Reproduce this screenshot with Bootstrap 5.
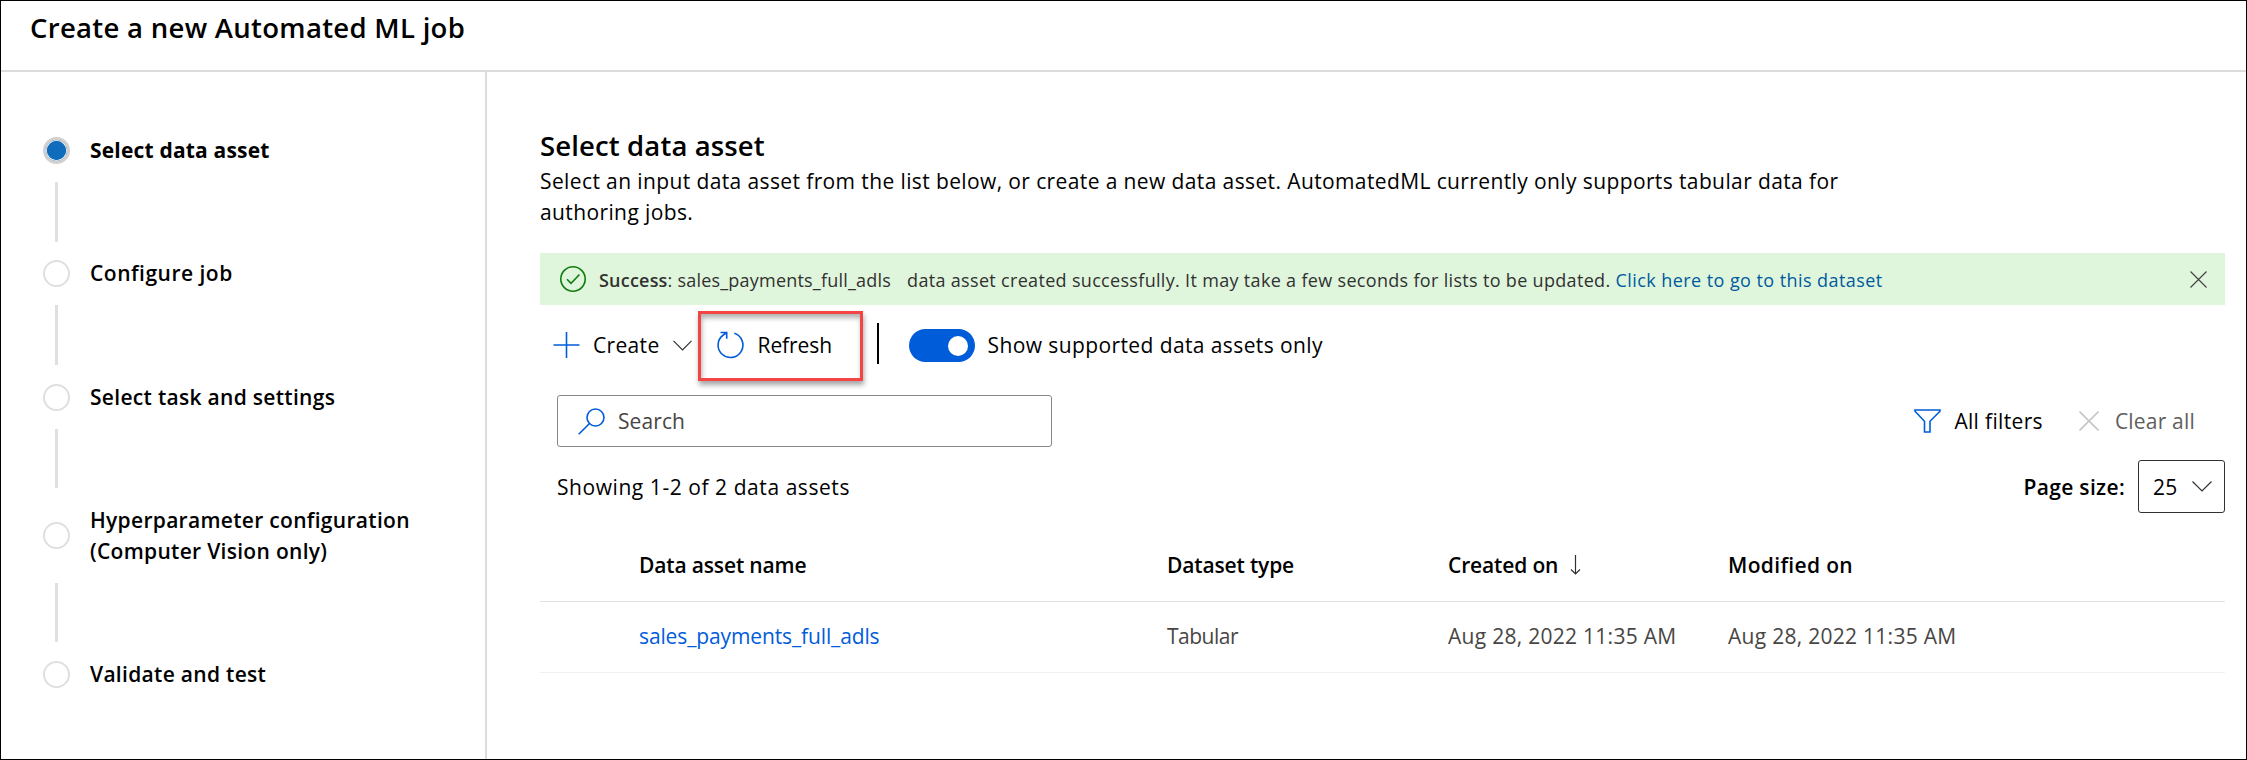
<!DOCTYPE html>
<html lang="en">
<head>
<meta charset="utf-8">
<title>Create a new Automated ML job</title>
<link href="https://cdn.jsdelivr.net/npm/bootstrap@5.3.0/dist/css/bootstrap.min.css" rel="stylesheet">
<style>
body{font-family:"Open Sans","Noto Sans",sans-serif;font-size:21px;line-height:31px;letter-spacing:.33px;color:#000;background:#fff}
.frame{height:760px;border:1px solid #000}
.top-bar{height:71px;border-bottom:2px solid #dcdcdc;padding:9px 0 0 29px}
.title-text{font-size:27.5px;line-height:36px;font-weight:600;margin:0;letter-spacing:.3px}
.content .title-text{letter-spacing:.13px}
.side{width:486px;border-right:2px solid #dcdcdc;padding:63px 0 0 42px}
.step-label{margin:0 0 0 20px;font-weight:600;letter-spacing:.3px}
.step-label.current{font-weight:700;letter-spacing:.18px}
.step-label.wide{letter-spacing:.5px}
.dot{width:27px;height:27px;border:2px solid #e1dfdd;border-radius:50%}
.dot.current{border:3px solid #d2d0ce;background:#0f6cbd;box-shadow:inset 0 0 0 .8px #fff}
.link-line{width:3px;height:59.5px;margin:16px 0 16.8px 12px;background:#e1dfdd}
.content{padding:56px 21px 0 53px}
.intro{margin:2px 0 25px;letter-spacing:.385px}
.banner{height:52px;background:#dff6dd;color:#323130;font-size:18px;line-height:26px;letter-spacing:.27px;padding:0 18px 0 20px}
.banner-text{margin:1px 0 0 13px;letter-spacing:.21px}
.gap-wide{margin:1px 0 0 16px;letter-spacing:.32px}
.banner a{color:#005a9e;letter-spacing:.43px}
.tools{height:80px;margin-bottom:10px;padding-left:13px}
.create-text{margin:1px 13px 0 13px}
.hl{width:165px;height:70px;margin:2px 0 0 6px;padding:0 0 2px 16px;border:3px solid #f44545;box-shadow:1px 4px 5px rgba(0,0,0,.35),inset 1px 4px 5px rgba(0,0,0,.3)}
.refresh-text{margin:1px 0 0 13px;letter-spacing:-.1px}
.vbar{width:2px;height:41px;margin:-4px 0 0 14px;background:#000}
.toggle{width:66px;height:33px;border-radius:17px;background:#015cda;padding-right:7px;margin:1px 13px 0 30px}
.knob{width:20px;height:20px;border-radius:50%;background:#fff}
.toggle-text{margin-top:1px;letter-spacing:.4px}
.filter-row{padding:0 30px 0 17px;margin-bottom:13px}
.search-box{width:495px;height:52px;border:1px solid #8a8886;border-radius:3px;padding-left:20px;color:#484644}
.search-text{margin:1px 0 0 13px;letter-spacing:.1px}
.filters-text{margin:1px 36px 0 13px}
.clear-text{margin:1px 0 0 16px;color:#605e5c;letter-spacing:.2px}
.count-row{padding-left:17px}
.count-text{margin-top:2px;letter-spacing:.56px}
.page-text{margin-top:2px}
.size-box{width:87px;height:53px;border:1px solid #323130;border-radius:3px;padding:0 12px 0 14px;margin-left:13px}
.assets{table-layout:fixed;margin:0}
.assets>:not(caption)>*>*{padding:0;vertical-align:middle}
.assets>thead>tr>th{font-weight:600;color:#000;height:88px;padding-top:17px;border-bottom:1px solid #e3e3e3;letter-spacing:-.15px}
.assets>thead>tr>th:last-child{letter-spacing:.33px}
.assets>tbody>tr>td{height:71px;color:#484644;border-bottom:1px solid #f0f0f0;letter-spacing:.28px}
.assets>tbody>tr>td.kind{letter-spacing:-.5px}
.assets a{color:#015cda;letter-spacing:-.12px}
.arrow{margin:-4px 0 0 6px}
.c-pick{width:99px}.c-name{width:528px}.c-kind{width:281px}.c-date{width:280px}
svg{fill:none;flex:none}
</style>
</head>
<body>
<div class="frame d-flex flex-column overflow-hidden">
<header class="top-bar"><h1 class="title-text">Create a new Automated ML job</h1></header>
<div class="d-flex flex-grow-1">
<nav class="side flex-shrink-0">
<div class="d-flex align-items-center"><span class="dot current"></span><span class="step-label current">Select data asset</span></div>
<div class="link-line"></div>
<div class="d-flex align-items-center"><span class="dot"></span><span class="step-label wide">Configure job</span></div>
<div class="link-line"></div>
<div class="d-flex align-items-center"><span class="dot"></span><span class="step-label">Select task and settings</span></div>
<div class="link-line"></div>
<div class="d-flex align-items-center"><span class="dot"></span><span class="step-label">Hyperparameter configuration<br>(Computer Vision only)</span></div>
<div class="link-line"></div>
<div class="d-flex align-items-center"><span class="dot"></span><span class="step-label">Validate and test</span></div>
</nav>
<main class="content flex-grow-1">
<h2 class="title-text">Select data asset</h2>
<p class="intro">Select an input data asset from the list below, or create a new data asset. AutomatedML currently only supports tabular data for<br>authoring jobs.</p>
<div class="banner d-flex align-items-center">
<svg width="26" height="26" stroke="#107c10" stroke-width="1.6"><circle cx="13" cy="13" r="12.2"/><path d="M7 13.300l4 4L19.500 8.500"/></svg>
<span class="banner-text"><b class="fw-semibold">Success</b>: sales_payments_full_adls</span>
<span class="gap-wide">data asset created successfully. It may take a few seconds for lists to be updated. <a class="text-decoration-none" href="#">Click here to go to this dataset</a></span>
<svg class="ms-auto" width="17" height="17" stroke="#484644" stroke-width="1.2"><path d="M.5 .5l16 16M16.500 .5l-16 16"/></svg>
</div>
<div class="tools d-flex align-items-center">
<svg width="27" height="26" stroke="#015cda" stroke-width="1.600"><path d="M.5 13h26M13.500 0v26"/></svg>
<span class="create-text">Create</span>
<svg width="19" height="11" stroke="#323130" stroke-width="1.200"><path d="M.5 .8l9 9 9-9"/></svg>
<div class="hl d-flex align-items-center">
<svg width="28" height="28" stroke="#015cda" stroke-width="1.600"><path d="M17.300 2.300A12.400 12.400 0 1 1 6.300 4L9.700 1.500M3.500 1.500h6.200v6.300"/></svg>
<span class="refresh-text">Refresh</span>
</div>
<span class="vbar"></span>
<span class="toggle d-flex align-items-center justify-content-end"><span class="knob"></span></span>
<span class="toggle-text">Show supported data assets only</span>
</div>
<div class="filter-row d-flex align-items-center">
<div class="search-box d-flex align-items-center me-auto">
<svg width="27" height="27" stroke="#015cda" stroke-width="1.600"><circle cx="17.500" cy="9.500" r="8.500"/><path d="M11.500 15.500L.7 26.300"/></svg>
<span class="search-text">Search</span>
</div>
<svg width="27" height="24" stroke="#015cda" stroke-width="1.600"><path d="M1 1h25v1.200L16 12.300V23h-5.500V12.300L1 2.200z"/></svg>
<span class="filters-text">All filters</span>
<svg width="20" height="20" stroke="#c8c6c4" stroke-width="1.600"><path d="M.5 .5l19 19M19.500 .5l-19 19"/></svg>
<span class="clear-text">Clear all</span>
</div>
<div class="count-row d-flex align-items-center">
<span class="count-text me-auto">Showing 1-2 of 2 data assets</span>
<span class="page-text fw-semibold">Page size:</span>
<div class="size-box d-flex align-items-center justify-content-between"><span class="page-text">25</span><svg width="20" height="11" stroke="#323130" stroke-width="1.200"><path d="M.5 .5L10 10 19.500 .5"/></svg></div>
</div>
<table class="assets table">
<colgroup><col class="c-pick"><col class="c-name"><col class="c-kind"><col class="c-date"><col></colgroup>
<thead><tr><th></th><th>Data asset name</th><th>Dataset type</th><th>Created on <svg class="arrow" width="11" height="20" stroke="#323130" stroke-width="1.200"><path d="M5.500 0v19M1 14.500l4.500 4.500 4.500-4.500"/></svg></th><th>Modified on</th></tr></thead>
<tbody><tr><td></td><td><a class="text-decoration-none" href="#">sales_payments_full_adls</a></td><td class="kind">Tabular</td><td>Aug 28, 2022 11:35 AM</td><td>Aug 28, 2022 11:35 AM</td></tr></tbody>
</table>
</main>
</div>
</div>
</body>
</html>
